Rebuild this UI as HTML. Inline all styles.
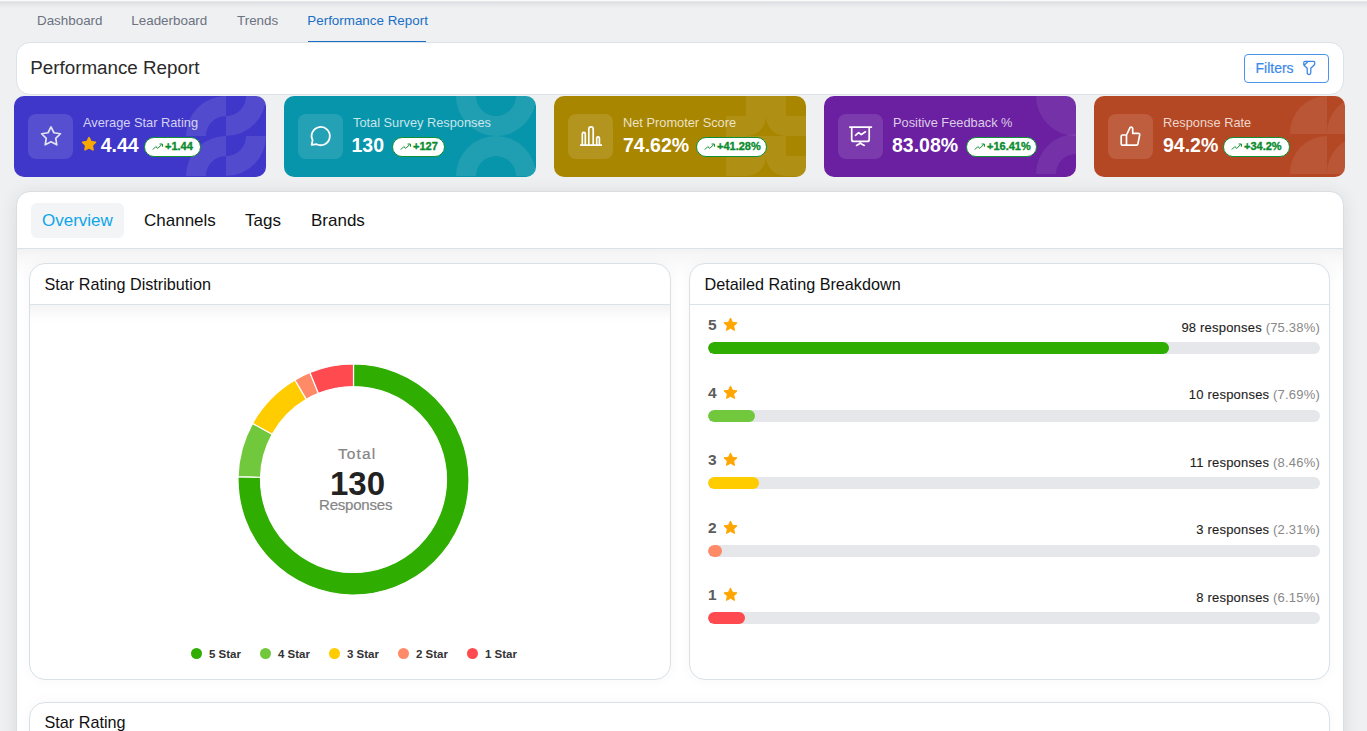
<!DOCTYPE html>
<html><head><meta charset="utf-8">
<style>
*{box-sizing:border-box;margin:0;padding:0}
html,body{width:1367px;height:731px;overflow:hidden}
body{background:#eff0f2;font-family:"Liberation Sans",sans-serif;position:relative;color:#222}
.abs{position:absolute;white-space:nowrap;line-height:1}
.topshadow{position:absolute;left:0;top:0;width:1367px;height:9px;background:linear-gradient(#fff 0px,#fafafa .6px,#dcdde0 1.9px,#e4e5e8 4px,#eff0f2 8.5px)}
.nav a{position:absolute;top:13.6px;font-size:13.4px;line-height:1;color:#6b7280;text-decoration:none;white-space:nowrap}
.nav a.act{color:#1a6fc4}
.nav .ul{position:absolute;left:308px;top:41px;width:118px;height:1.5px;background:#1a6fc4}
.hdr{position:absolute;left:16px;top:42px;width:1328px;height:53px;background:#fff;border:1px solid #dbe2e8;border-radius:14px}
.hdr h1{position:absolute;left:13.3px;top:15.8px;font-size:18.8px;line-height:1;font-weight:normal;color:#2a2a2a;white-space:nowrap}
.filters{position:absolute;left:1227px;top:11px;width:85px;height:29px;border:1px solid #4a94ee;border-radius:4px;color:#3a89ea;font-size:14px}
.filters span{position:absolute;left:10.5px;top:6px;line-height:1;-webkit-text-stroke:.2px #3a89ea}
.filters svg{position:absolute;left:58px;top:5.3px}
.kpi{position:absolute;top:96px;width:252px;height:81px;border-radius:10px;overflow:hidden;color:#fff}
.kpi .ib{position:absolute;left:14px;top:18px;width:45px;height:45px;border-radius:8px;background:rgba(255,255,255,.12)}
.kpi .ib svg{position:absolute;left:0;top:0}
.kpi .lb{position:absolute;left:69px;top:21px;font-size:12.8px;line-height:1;color:rgba(255,255,255,.78);white-space:nowrap}
.kpi .vl{position:absolute;left:69px;top:39px;height:20px;font-size:19.5px;line-height:20px;font-weight:bold;white-space:nowrap}
.badge{position:absolute;top:41px;height:20px;border:1.5px solid #0f9033;border-radius:10px;background:#fff;color:#0a8c2e;font-size:11px;font-weight:bold;line-height:1;-webkit-text-stroke:.35px #0a8c2e;white-space:nowrap}
.badge svg{position:absolute;left:6.5px;top:3.6px}
.badge span{position:absolute;top:3px}
.deco{position:absolute;right:0;top:0}
.main{position:absolute;left:16px;top:191px;width:1328px;height:600px;background:#fff;border:1px solid #d9dee3;border-radius:14px;box-shadow:0 2px 18px rgba(0,0,0,.09)}
.tabs{position:absolute;left:-1px;top:-1px;width:1328px;height:58px;border-bottom:1px solid #dbe2e8}
.tab{position:absolute;top:12px;height:35px;font-size:17px;line-height:1;color:#111;border-radius:6px;white-space:nowrap}
.tab span{position:absolute;top:9px}
.tab.act{background:#f3f4f6;color:#0ea5e9}
.content{position:absolute;left:0;top:57px;width:1326px;height:540px;background:linear-gradient(#f2f2f3,#f7f7f8 7px,#fbfbfb 16px,#fff 34px)}
.panel{position:absolute;background:#fff;border:1px solid #d9e0e6;border-radius:16px;overflow:hidden;box-shadow:0 0 14px rgba(0,0,0,.035)}
.panel .ph{position:absolute;left:0;top:0;width:100%;height:41px;border-bottom:1px solid #dbe2e8}
.panel .ph span{position:absolute;left:14.5px;top:12px;font-size:16.2px;line-height:1;color:#111;white-space:nowrap}
.row .n{position:absolute;left:18px;font-size:15.5px;font-weight:bold;color:#5c5c5c;line-height:1}
.row .st{position:absolute;left:33px}
.row .rt{position:absolute;right:10px;font-size:13px;line-height:1;color:#1e1e1e;letter-spacing:.2px;white-space:nowrap;-webkit-text-stroke:.12px #1e1e1e}
.row .rt i{font-style:normal;color:#888;-webkit-text-stroke:0}
.row .bar{position:absolute;left:18px;width:612px;height:12px;border-radius:6px;background:#e5e7eb;overflow:hidden}
.row .bar div{height:12px;border-radius:6px}
.leg{position:absolute;top:648px}
.leg b{position:absolute;top:.4px;width:11px;height:11px;border-radius:50%}
.leg span{position:absolute;top:.7px;font-size:11.5px;line-height:1;font-weight:bold;color:#333;white-space:nowrap}
</style></head>
<body>
<div class="topshadow"></div>
<div class="nav">
<a style="left:37px">Dashboard</a>
<a style="left:131.3px">Leaderboard</a>
<a style="left:237px">Trends</a>
<a class="act" style="left:307.3px">Performance Report</a>
<div class="ul"></div>
</div>

<div class="hdr"><h1>Performance Report</h1>
<div class="filters"><span>Filters</span>
<svg width="14" height="16" viewBox="0 0 14 16"><path d="M2 1.3H10.5a1.2 1.2 0 0 1 1.2 1.2V4.5L7.8 8.3V12.8a1.8 1.8 0 0 1-3.6 0V8.3L.8 5V2.5A1.2 1.2 0 0 1 2 1.3ZM5.2 1.3L1.2 5.3" fill="none" stroke="#3a89ea" stroke-width="1.3" stroke-linejoin="round"/></svg>
</div></div>

<!-- KPI cards -->
<div class="kpi" style="left:14px;background:#3f37c9">
 <svg class="deco" style="right:0" width="80" height="81" viewBox="0 0 80 81" fill="rgba(255,255,255,.1)">
  <path d="M0 40A40 40 0 0 1 40 0V20A20 20 0 0 0 20 40Z"/>
  <path d="M40 20A20 20 0 0 0 60 0H80A40 40 0 0 1 40 40Z"/>
  <path d="M0 80A40 40 0 0 1 40 40V60A20 20 0 0 0 20 80Z"/>
  <path d="M40 60A20 20 0 0 0 60 40H80A40 40 0 0 1 40 80Z"/>
 </svg>
 <div class="ib"><svg width="45" height="45" viewBox="0 0 45 45"><path d="M23.00 12.90L25.94 18.75L32.42 19.74L27.76 24.35L28.82 30.81L23.00 27.80L17.18 30.81L18.24 24.35L13.58 19.74L20.06 18.75Z" fill="none" stroke="#e4e4ef" stroke-width="1.7" stroke-linejoin="round"/></svg></div>
 <div class="lb">Average Star Rating</div>
 <div class="vl"><svg style="position:absolute;left:-1.7px;top:1px" width="16" height="16" viewBox="0 0 24 24"><path d="M12.00 2.40L15.00 8.47L21.70 9.45L16.85 14.18L18.00 20.85L12.00 17.70L6.00 20.85L7.15 14.18L2.30 9.45L9.00 8.47Z" fill="#f9a800" stroke="#f9a800" stroke-width="2.4" stroke-linejoin="round"/></svg><span style="position:absolute;left:17.7px">4.44</span></div>
 <div class="badge" style="left:130px;width:57px"><svg width="12" height="9" viewBox="0 0 12 9"><path d="M.8 7.6l3-3 2 1.8 4-4M7.6 2h2.8v2.8" fill="none" stroke="#0a8c2e" stroke-width="1" stroke-linejoin="round"/></svg><span style="left:20px">+1.44</span></div>
</div>
<div class="kpi" style="left:284px;background:#0795ab">
 <svg class="deco" width="80" height="81" viewBox="0 0 80 81" fill="rgba(255,255,255,.1)">
  <path d="M0 0A40 40 0 0 0 80 0H60A20 20 0 0 1 20 0Z"/>
  <path d="M0 80A40 40 0 0 1 80 80H60A20 20 0 0 0 20 80Z"/>
 </svg>
 <div class="ib"><svg width="45" height="45" viewBox="0 0 45 45"><path d="M18.6 30.2A9.1 9.1 0 1 0 14.6 26.2L13.7 30.9Z" fill="none" stroke="#fff" stroke-width="1.8" stroke-linejoin="round"/></svg></div>
 <div class="lb">Total Survey Responses</div>
 <div class="vl"><span style="position:absolute;left:-1.5px">130</span></div>
 <div class="badge" style="left:108px;width:53px"><svg width="12" height="9" viewBox="0 0 12 9"><path d="M.8 7.6l3-3 2 1.8 4-4M7.6 2h2.8v2.8" fill="none" stroke="#0a8c2e" stroke-width="1" stroke-linejoin="round"/></svg><span style="left:20px">+127</span></div>
</div>
<div class="kpi" style="left:554px;background:#a98600">
 <svg class="deco" width="80" height="81" viewBox="0 0 80 81" fill="rgba(255,255,255,.08)">
  <path d="M20 0H60V20H80V40H60V60H80V80H0V20H20Z M20 40A20 20 0 0 0 40 20A20 20 0 0 0 60 40Z M20 80A20 20 0 0 0 40 60A20 20 0 0 0 60 80Z" fill-rule="evenodd"/>
 </svg>
 <div class="ib"><svg width="45" height="45" viewBox="0 0 45 45"><path d="M12.1 31.2H34M14.3 31V19.9a1.5 1.5 0 0 1 3 0V31M20.8 31V15.1a2.2 2.2 0 0 1 4.4 0V31M28.7 31V24.3a1.35 1.35 0 0 1 2.7 0V31" fill="none" stroke="#fff" stroke-width="1.7"/></svg></div>
 <div class="lb">Net Promoter Score</div>
 <div class="vl"><span style="position:absolute;left:0">74.62%</span></div>
 <div class="badge" style="left:142px;width:71px"><svg width="12" height="9" viewBox="0 0 12 9"><path d="M.8 7.6l3-3 2 1.8 4-4M7.6 2h2.8v2.8" fill="none" stroke="#0a8c2e" stroke-width="1" stroke-linejoin="round"/></svg><span style="left:20px">+41.28%</span></div>
</div>
<div class="kpi" style="left:824px;background:#6a20a1">
 <svg class="deco" width="80" height="81" viewBox="0 0 80 81" fill="rgba(255,255,255,.08)">
  <path d="M40 0H80V40A40 40 0 0 1 40 0Z"/>
  <path d="M40 78A40 40 0 0 1 80 38V58A20 20 0 0 0 60 78Z"/>
 </svg>
 <div class="ib"><svg width="45" height="45" viewBox="0 0 45 45"><path d="M11.8 13.1H33.4M13.7 13.1V25.4a2 2 0 0 0 2 2H29.2a2 2 0 0 0 2-2V13.1M22.3 27.4V29.2M18.5 31.4L22.3 29.2L26.3 31.4M17.5 21.3L20.6 18.6L23.3 20.6L27.4 17.8" fill="none" stroke="#fff" stroke-width="1.7" stroke-linecap="round" stroke-linejoin="round"/></svg></div>
 <div class="lb">Positive Feedback %</div>
 <div class="vl"><span style="position:absolute;left:-1px">83.08%</span></div>
 <div class="badge" style="left:142px;width:71px"><svg width="12" height="9" viewBox="0 0 12 9"><path d="M.8 7.6l3-3 2 1.8 4-4M7.6 2h2.8v2.8" fill="none" stroke="#0a8c2e" stroke-width="1" stroke-linejoin="round"/></svg><span style="left:20px">+16.41%</span></div>
</div>
<div class="kpi" style="left:1094px;width:251px;background:#b54824">
 <svg class="deco" width="80" height="81" viewBox="0 0 80 81" fill="rgba(255,255,255,.08)">
  <path d="M25 38A37 37 0 0 1 62 0V38Z"/>
  <path d="M62 38A37 37 0 0 1 99 0V38Z"/>
  <path d="M25 78A37 37 0 0 1 62 40V78Z"/>
  <path d="M62 78A37 37 0 0 1 99 40V78Z"/>
 </svg>
 <div class="ib"><svg width="45" height="45" viewBox="0 0 45 45"><path d="M18.5 21H14.4a1.2 1.2 0 0 0-1.2 1.2V29.9a1.2 1.2 0 0 0 1.2 1.2H18.5ZM18.5 31.1V21L22 13.6a1.6 1.6 0 0 1 2.7 1V19.3H30.3a1.4 1.4 0 0 1 1.4 1.6L29.9 29.9a1.4 1.4 0 0 1-1.4 1.2H18.5" fill="none" stroke="#fff" stroke-width="1.7" stroke-linejoin="round"/></svg></div>
 <div class="lb">Response Rate</div>
 <div class="vl"><span style="position:absolute;left:0">94.2%</span></div>
 <div class="badge" style="left:129px;width:67px"><svg width="12" height="9" viewBox="0 0 12 9"><path d="M.8 7.6l3-3 2 1.8 4-4M7.6 2h2.8v2.8" fill="none" stroke="#0a8c2e" stroke-width="1" stroke-linejoin="round"/></svg><span style="left:20px">+34.2%</span></div>
</div>

<div class="main">
 <div class="tabs">
  <div class="tab act" style="left:15px;width:93px"><span style="left:11px">Overview</span></div>
  <div class="tab" style="left:116px;width:90px"><span style="left:12px">Channels</span></div>
  <div class="tab" style="left:217px;width:60px"><span style="left:12px">Tags</span></div>
  <div class="tab" style="left:283px;width:78px"><span style="left:12px">Brands</span></div>
 </div>
 <div class="content"></div>
</div>

<!-- left panel -->
<div class="panel" style="left:29px;top:263px;width:642px;height:417px">
 <div style="position:absolute;left:0;top:41px;width:100%;height:40px;background:linear-gradient(#f3f3f4,#f9f9f9 7px,#fdfdfd 13px,#fff 18px)"></div>
 <div class="ph"><span>Star Rating Distribution</span></div>
</div>
<svg style="position:absolute;left:0;top:0" width="1367" height="731">
 <g transform="translate(353.5 479.5)" stroke="#fff" stroke-width="1.2">
  <path fill="#2fad00" d="M0.00 -115.50A115.5 115.5 0 1 1 -115.47 -2.79L-92.97 -2.25A93.0 93.0 0 1 0 0.00 -93.00Z"/>
  <path fill="#72c83c" d="M-115.47 -2.79A115.5 115.5 0 0 1 -100.94 -56.13L-81.28 -45.20A93.0 93.0 0 0 0 -92.97 -2.25Z"/>
  <path fill="#ffcc00" d="M-100.94 -56.13A115.5 115.5 0 0 1 -58.55 -99.56L-47.15 -80.16A93.0 93.0 0 0 0 -81.28 -45.20Z"/>
  <path fill="#ff8a68" d="M-58.55 -99.56A115.5 115.5 0 0 1 -43.55 -106.97L-35.07 -86.13A93.0 93.0 0 0 0 -47.15 -80.16Z"/>
  <path fill="#ff4a4f" d="M-43.55 -106.97A115.5 115.5 0 0 1 0.00 -115.50L0.00 -93.00A93.0 93.0 0 0 0 -35.07 -86.13Z"/>
 </g>
</svg>
<div class="abs" style="left:338px;top:445.5px;font-size:15.5px;color:#858585;letter-spacing:1.1px;-webkit-text-stroke:.2px #858585">Total</div>
<div class="abs" style="left:330px;top:467px;font-size:33px;font-weight:bold;color:#222">130</div>
<div class="abs" style="left:319px;top:497px;font-size:15px;color:#858585;letter-spacing:-.2px;-webkit-text-stroke:.2px #858585">Responses</div>

<div class="leg" style="left:0">
 <b style="left:191px;background:#2fad00"></b><span style="left:209px">5 Star</span>
 <b style="left:260px;background:#72c83c"></b><span style="left:278px">4 Star</span>
 <b style="left:329px;background:#ffcc00"></b><span style="left:347px">3 Star</span>
 <b style="left:398px;background:#ff8a68"></b><span style="left:416px">2 Star</span>
 <b style="left:467px;background:#ff4a4f"></b><span style="left:485px">1 Star</span>
</div>

<!-- right panel -->
<div class="panel" style="left:689px;top:263px;width:641px;height:417px">
 <div class="ph"><span>Detailed Rating Breakdown</span></div>
</div>
<div id="rows">
<div class="row" style="position:absolute;left:690px;top:310.0px;width:640px;height:60px"><div class="n" style="top:7px">5</div><div class="st" style="top:7px"><svg width="15" height="15" viewBox="0 0 24 24"><path d="M12 1.5l3.2 6.9 7.3.9-5.4 5 1.4 7.3L12 18l-6.5 3.6 1.4-7.3-5.4-5 7.3-.9z" fill="#ffa500" stroke="#ffa500" stroke-width="1.5" stroke-linejoin="round"/></svg></div><div class="rt" style="top:10.6px">98 responses <i>(75.38%)</i></div><div class="bar" style="top:32px"><div style="width:460.7px;background:#2fad00"></div></div></div>
<div class="row" style="position:absolute;left:690px;top:377.5px;width:640px;height:60px"><div class="n" style="top:7px">4</div><div class="st" style="top:7px"><svg width="15" height="15" viewBox="0 0 24 24"><path d="M12 1.5l3.2 6.9 7.3.9-5.4 5 1.4 7.3L12 18l-6.5 3.6 1.4-7.3-5.4-5 7.3-.9z" fill="#ffa500" stroke="#ffa500" stroke-width="1.5" stroke-linejoin="round"/></svg></div><div class="rt" style="top:10.6px">10 responses <i>(7.69%)</i></div><div class="bar" style="top:32px"><div style="width:46.5px;background:#72c83c"></div></div></div>
<div class="row" style="position:absolute;left:690px;top:445.0px;width:640px;height:60px"><div class="n" style="top:7px">3</div><div class="st" style="top:7px"><svg width="15" height="15" viewBox="0 0 24 24"><path d="M12 1.5l3.2 6.9 7.3.9-5.4 5 1.4 7.3L12 18l-6.5 3.6 1.4-7.3-5.4-5 7.3-.9z" fill="#ffa500" stroke="#ffa500" stroke-width="1.5" stroke-linejoin="round"/></svg></div><div class="rt" style="top:10.6px">11 responses <i>(8.46%)</i></div><div class="bar" style="top:32px"><div style="width:51.2px;background:#ffcc00"></div></div></div>
<div class="row" style="position:absolute;left:690px;top:512.5px;width:640px;height:60px"><div class="n" style="top:7px">2</div><div class="st" style="top:7px"><svg width="15" height="15" viewBox="0 0 24 24"><path d="M12 1.5l3.2 6.9 7.3.9-5.4 5 1.4 7.3L12 18l-6.5 3.6 1.4-7.3-5.4-5 7.3-.9z" fill="#ffa500" stroke="#ffa500" stroke-width="1.5" stroke-linejoin="round"/></svg></div><div class="rt" style="top:10.6px">3 responses <i>(2.31%)</i></div><div class="bar" style="top:32px"><div style="width:13.5px;background:#ff8a68"></div></div></div>
<div class="row" style="position:absolute;left:690px;top:580.0px;width:640px;height:60px"><div class="n" style="top:7px">1</div><div class="st" style="top:7px"><svg width="15" height="15" viewBox="0 0 24 24"><path d="M12 1.5l3.2 6.9 7.3.9-5.4 5 1.4 7.3L12 18l-6.5 3.6 1.4-7.3-5.4-5 7.3-.9z" fill="#ffa500" stroke="#ffa500" stroke-width="1.5" stroke-linejoin="round"/></svg></div><div class="rt" style="top:10.6px">8 responses <i>(6.15%)</i></div><div class="bar" style="top:32px"><div style="width:37.0px;background:#ff4a4f"></div></div></div>
</div>

<!-- bottom panel -->
<div class="panel" style="left:29px;top:702px;width:1301px;height:100px"><div class="ph"><span style="top:11px">Star Rating</span></div></div>
</body></html>
